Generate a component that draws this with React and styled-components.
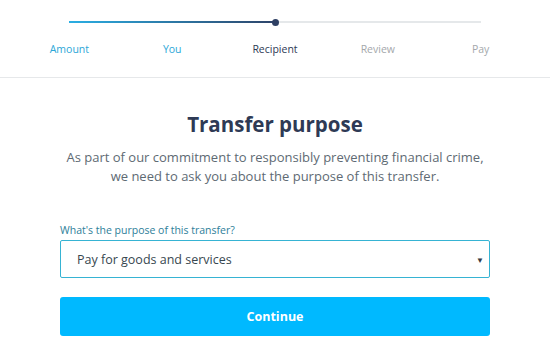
import React from 'react';
import styled, { createGlobalStyle } from 'styled-components';

const Global = createGlobalStyle`
  html, body { margin: 0; padding: 0; background: #fff; }
  body { font-family: "Open Sans", Lato, sans-serif; }
`;

const steps = ['Amount', 'You', 'Recipient', 'Review', 'Pay'];
const current = 2;

const App = () => {
  return (
    <>
      <Global />
      <Header>
        <Track>
          <Done style={{ width: `${(current / (steps.length - 1)) * 100}%` }} />
          <Dot style={{ left: `${(current / (steps.length - 1)) * 100}%` }} />
        </Track>
        <Steps>
          {steps.map((s, i) => (
            <Step key={s} $state={i < current ? 'done' : i === current ? 'active' : 'todo'}>
              {s}
            </Step>
          ))}
        </Steps>
      </Header>
      <Main>
        <Title>Transfer purpose</Title>
        <Intro>
          As part of our commitment to responsibly preventing financial crime,
          <br />
          we need to ask you about the purpose of this transfer.
        </Intro>
        <Form>
          <Label>What's the purpose of this transfer?</Label>
          <SelectBox>
            <span>Pay for goods and services</span>
            <Caret>▼</Caret>
          </SelectBox>
          <Button>Continue</Button>
        </Form>
      </Main>
    </>
  );
};

const Header = styled.header`
  height: 78px;
  border-bottom: 1px solid #e6e8ea;
  padding-top: 21px;
  box-sizing: border-box;
`;

const Track = styled.div`
  position: relative;
  margin: 0 69px;
  height: 2px;
  background: #e5e8ea;
`;

const Done = styled.div`
  height: 100%;
  background: linear-gradient(to right, #2aaee3, #2e4369);
`;

const Dot = styled.div`
  position: absolute;
  top: -2.5px;
  width: 7px;
  height: 7px;
  margin-left: -3.5px;
  border-radius: 50%;
  background: #2e3f63;
`;

const Steps = styled.div`
  display: grid;
  grid-template-columns: repeat(5, 1fr);
  margin: 19px 18px 0;
`;

const stepColor = {
  done: '#2ca7d8',
  active: '#2e3a55',
  todo: '#a4a8ab',
};

const Step = styled.div`
  text-align: center;
  font-size: 10.5px;
  line-height: 14px;
  color: ${(p) => stepColor[p.$state]};
`;

const Main = styled.main`
  padding: 33px 60px 0;
  text-align: center;
`;

const Title = styled.h1`
  margin: 0;
  font-size: 20.5px;
  font-weight: 700;
  color: #2e3a55;
  line-height: 26px;
`;

const Intro = styled.p`
  margin: 11px 0 0;
  font-size: 13px;
  line-height: 19px;
  color: #5e6a73;
`;

const Form = styled.div`
  margin-top: 37px;
  text-align: left;
`;

const Label = styled.div`
  font-size: 10.5px;
  color: #2e7e99;
  line-height: 14px;
  margin-bottom: 3px;
`;

const SelectBox = styled.div`
  height: 38px;
  border: 1px solid #36b3d3;
  border-radius: 2px;
  box-sizing: border-box;
  display: flex;
  align-items: center;
  justify-content: space-between;
  padding: 0 5px 0 16px;
  font-size: 12.5px;
  color: #37474f;
`;

const Caret = styled.span`
  font-size: 8px;
  color: #333a44;
`;

const Button = styled.button`
  display: block;
  width: 100%;
  margin-top: 19px;
  height: 39px;
  border: 0;
  border-radius: 3px;
  background: #00b9ff;
  color: #fff;
  font-family: inherit;
  font-size: 12.5px;
  font-weight: 700;
`;

export default App;
